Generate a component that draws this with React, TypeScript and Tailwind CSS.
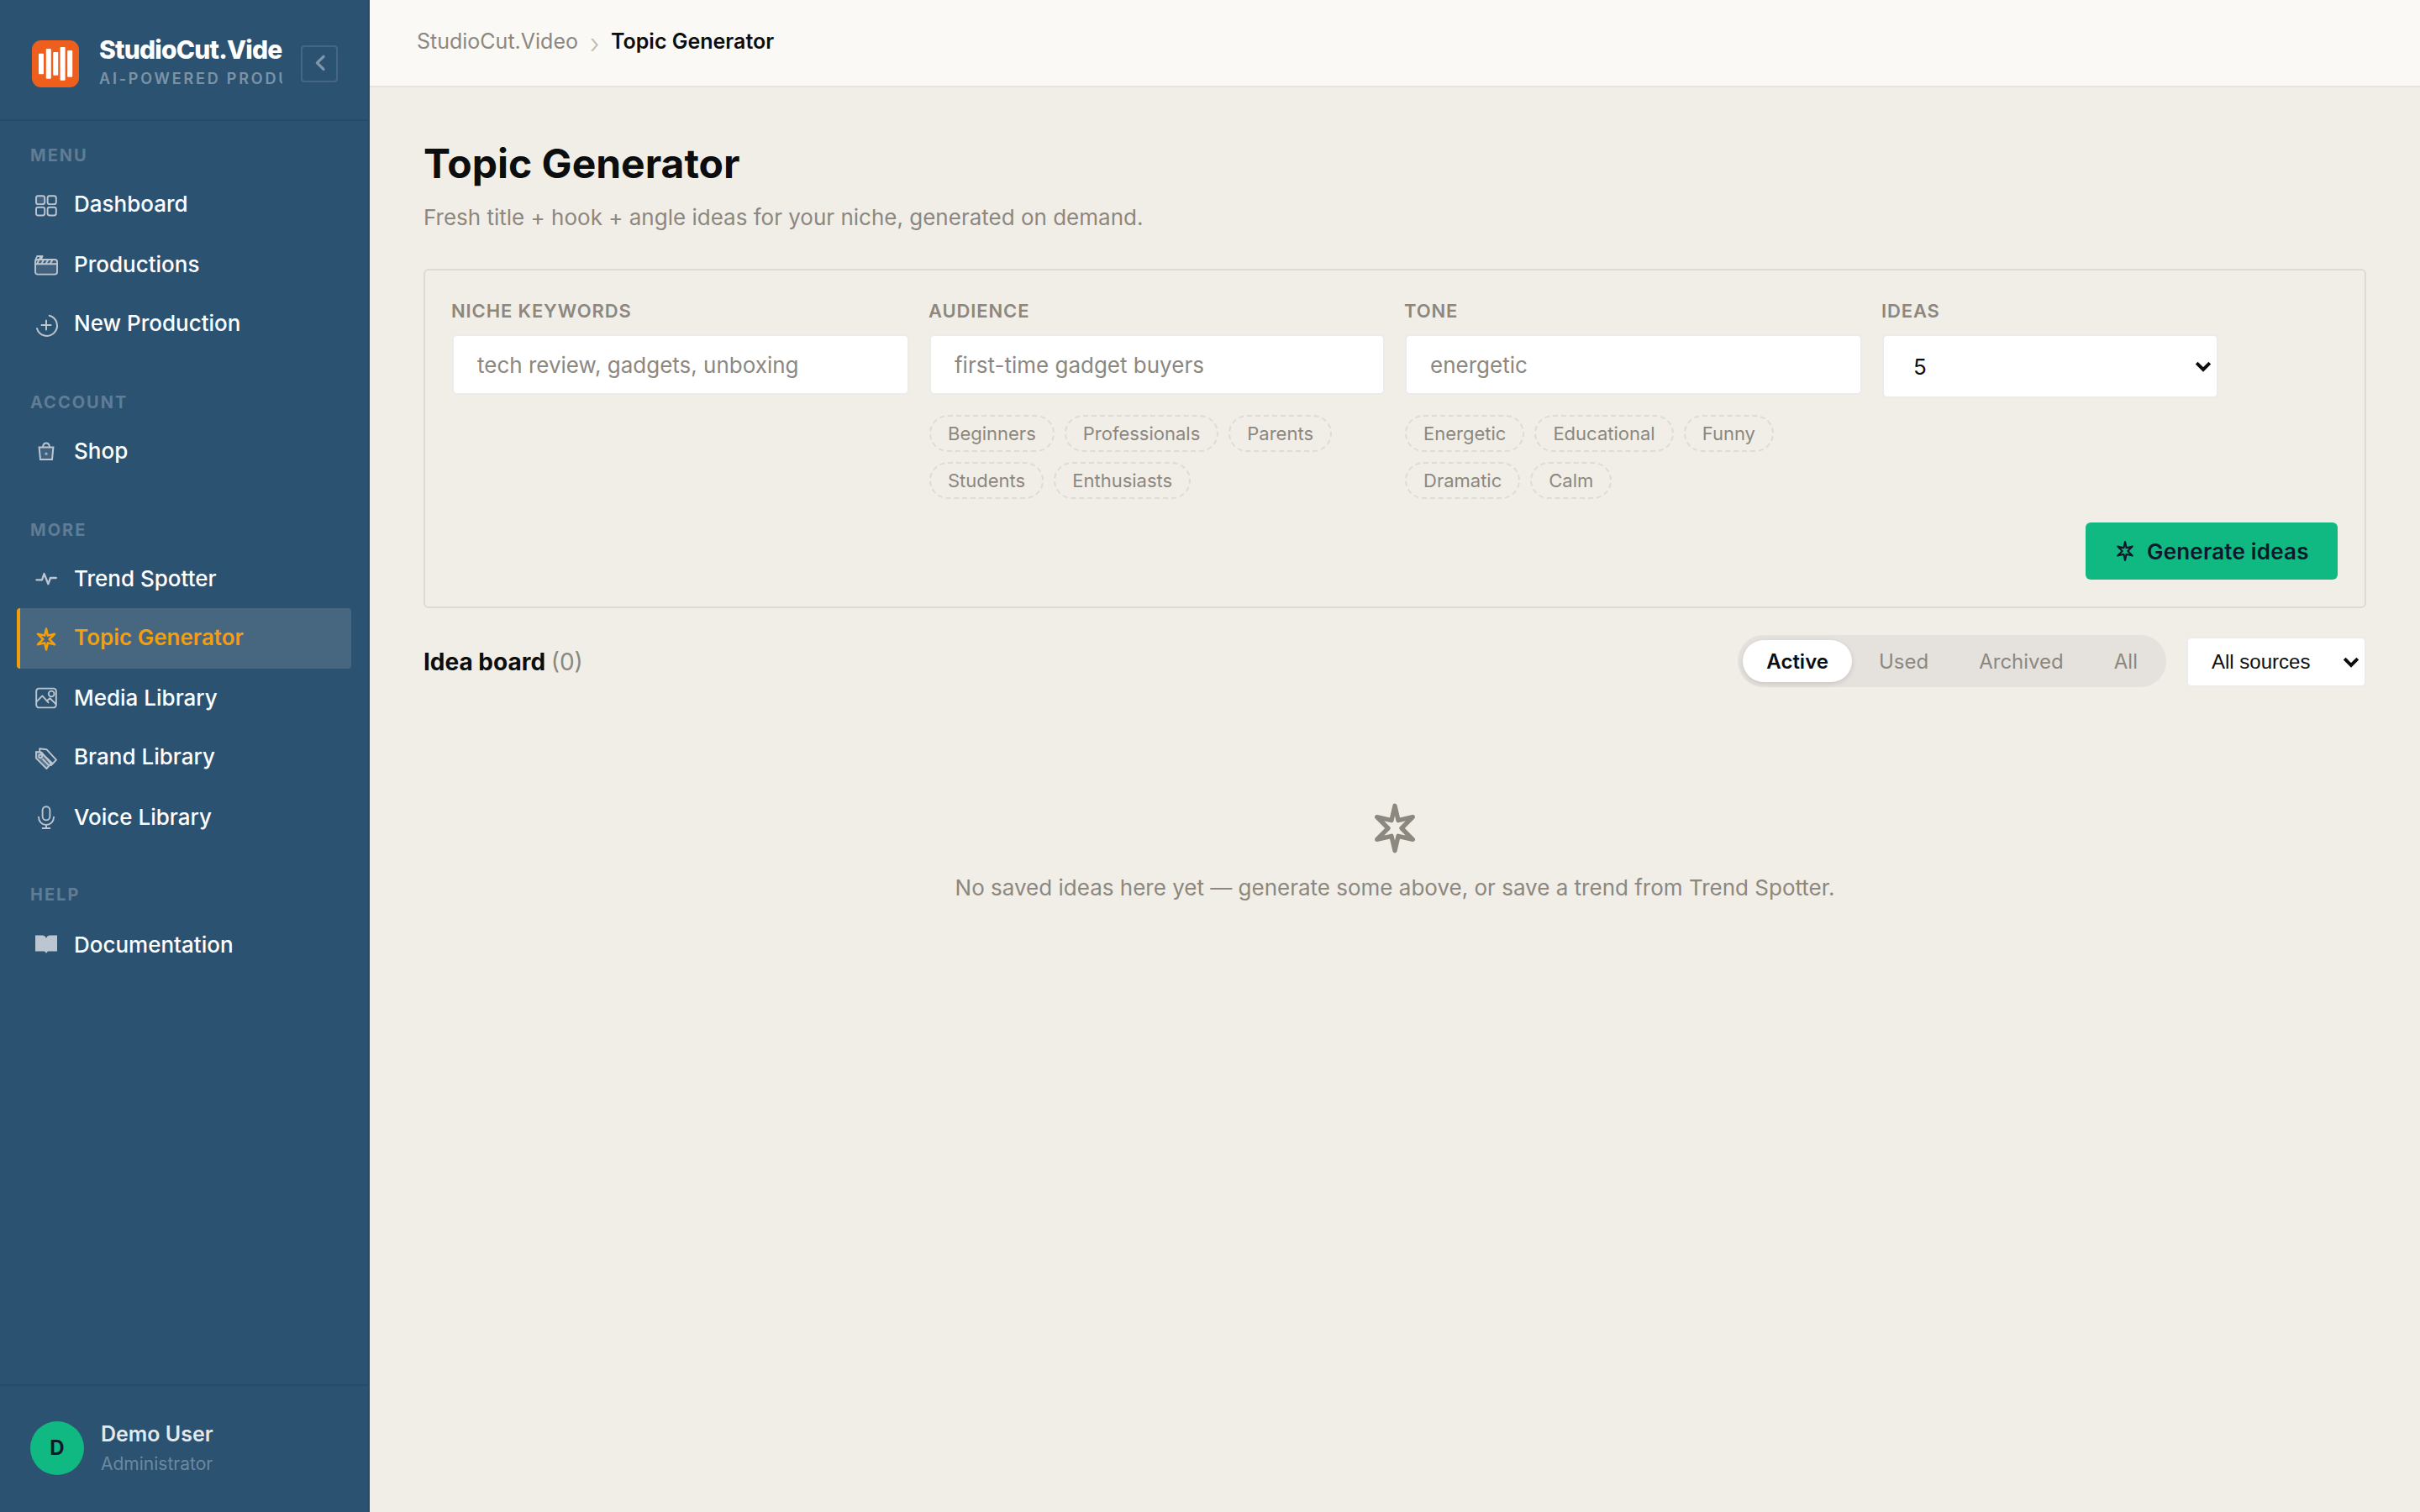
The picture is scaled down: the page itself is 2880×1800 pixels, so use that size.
import type { ReactNode } from "react";

const STAR = "M12 2L13.5 8.5L20 7L15 12L20 17L13.5 15.5L12 22L10.5 15.5L4 17L9 12L4 7L10.5 8.5Z";

function Star({ className }: { className: string }) {
  return (
    <svg viewBox="0 0 24 24" fill="none" stroke="currentColor" strokeWidth="2" strokeLinecap="round" strokeLinejoin="round" className={className}>
      <path d={STAR} />
    </svg>
  );
}

function NavIcon({ children, width = 2 }: { children: ReactNode; width?: number }) {
  return (
    <svg viewBox="0 0 30 30" fill="none" stroke="currentColor" strokeWidth={width} strokeLinecap="round" strokeLinejoin="round" className="size-[30px] shrink-0 overflow-visible">
      {children}
    </svg>
  );
}

const icons: Record<string, ReactNode> = {
  dashboard: (
    <NavIcon width={1.9}>
      <rect x="3" y="5.3" width="10.2" height="9.8" rx="2.4" fill="currentColor" fillOpacity="0.14" />
      <rect x="16.6" y="5.3" width="10.2" height="9.8" rx="2.4" />
      <rect x="3" y="18.7" width="10.2" height="9.8" rx="2.4" />
      <rect x="16.6" y="18.7" width="10.2" height="9.8" rx="2.4" />
    </NavIcon>
  ),
  productions: (
    <NavIcon width={1.9}>
      <rect x="2" y="10" width="26" height="17.6" rx="2.8" fill="currentColor" fillOpacity="0.14" />
      <path d="M2 15.2H28M2.3 10.5L4.2 6H10.6L8.6 10M4.2 15L8.4 6.4M9.4 15L12 10.2M14.6 15L17.2 10.2M19.8 15L22.4 10.2" />
    </NavIcon>
  ),
  create: (
    <NavIcon>
      <path d="M18.7 5.8A12.2 12.2 0 1 1 4 21M15 11.6V22.6M9.5 17.1H20.5" />
    </NavIcon>
  ),
  shop: (
    <NavIcon>
      <path d="M6.6 10.6H23.4L22 25H8Z" fill="currentColor" fillOpacity="0.14" strokeLinejoin="miter" />
      <path d="M11 10.2C11.4 7.2 13 5.6 15 5.6S18.6 7.2 19 10.2" />
      <circle cx="15" cy="18.2" r="1.6" fill="currentColor" stroke="none" opacity="0.8" />
    </NavIcon>
  ),
  trend: (
    <NavIcon width={2.3}>
      <path d="M3.4 16.3H10L12.5 9L17.4 21.2L20 14H26.8" />
    </NavIcon>
  ),
  topic: (
    <NavIcon>
      <path d={STAR} transform="translate(0 1) scale(1.25)" />
    </NavIcon>
  ),
  media: (
    <NavIcon width={1.9}>
      <rect x="3.2" y="3.6" width="23.6" height="22.8" rx="3.2" />
      <circle cx="21.2" cy="10" r="3.4" />
      <path d="M3.4 19.4L10.4 12.4L17.6 20.4M15.6 18.4L19.4 15.2L26.6 22.2" />
    </NavIcon>
  ),
  brand: (
    <NavIcon width={1.9}>
      <path d="M7.2 8V4.2L15.4 5.2L27 17.6L20.8 24" />
      <path d="M3 8L9.4 8.6L20.8 22.2L15.4 28L3 15.6Z" fill="currentColor" fillOpacity="0.3" />
      <path d="M8 8.2L22.6 22M11 17L18 24.2" />
      <circle cx="8.2" cy="13.2" r="2" />
    </NavIcon>
  ),
  voice: (
    <NavIcon width={1.9}>
      <rect x="10.6" y="2.2" width="8.8" height="16.2" rx="4.4" />
      <path d="M6 14.8A9 9.2 0 0 0 24 14.8M15 24V28M10.6 28H19.4" />
    </NavIcon>
  ),
  docs: (
    <NavIcon>
      <path d="M2 4.4H11Q14 4.8 15 7.8Q16 4.8 19 4.4H28V23.6H17L15 25.8L13 23.6H2Z" fill="currentColor" stroke="none" />
    </NavIcon>
  ),
};

type Item = { label: string; icon: string; row?: string; text?: string; active?: boolean };

const sections: { title: string; space: string; items: Item[] }[] = [
  {
    title: "MENU",
    space: "mt-[29px]",
    items: [
      { label: "Dashboard", icon: "dashboard" },
      { label: "Productions", icon: "productions", row: "h-[72px]", text: "pt-[2px]" },
      { label: "New Production", icon: "create" },
    ],
  },
  { title: "ACCOUNT", space: "mt-[47px]", items: [{ label: "Shop", icon: "shop" }] },
  {
    title: "MORE",
    space: "mt-[47px]",
    items: [
      { label: "Trend Spotter", icon: "trend" },
      { label: "Topic Generator", icon: "topic", row: "h-[72px]", text: "pb-[2px]", active: true },
      { label: "Media Library", icon: "media" },
      { label: "Brand Library", icon: "brand", row: "h-[72px]", text: "pb-[2px]" },
      { label: "Voice Library", icon: "voice" },
    ],
  },
  { title: "HELP", space: "mt-[45px]", items: [{ label: "Documentation", icon: "docs", row: "h-[72px]", text: "pt-[2px]" }] },
];

function NavRow({ item }: { item: Item }) {
  return (
    <a
      className={[
        "mx-5 flex items-center gap-[18px] rounded-[4px] border-l-4 pl-4 text-[26px] leading-8",
        item.row ?? "h-[70px]",
        item.active ? "border-[#f59e0b] bg-[#476781] font-semibold text-[#f59e0b]" : "border-transparent font-medium text-white",
      ].join(" ")}
    >
      <span className={item.active ? "shrink-0" : "shrink-0 text-[#bcc6d0]"}>{icons[item.icon]}</span>
      <span className={item.text ?? ""}>{item.label}</span>
    </a>
  );
}

function Logo() {
  return (
    <svg viewBox="0 0 60 60" className="size-[60px] shrink-0">
      <rect x="2" y="2" width="56" height="56" rx="11" fill="#ee5f1e" />
      <g fill="#fff">
        <rect x="10" y="17.7" width="6" height="24.6" rx="1" />
        <rect x="18.8" y="12" width="6" height="35.7" rx="1" />
        <rect x="27.2" y="16" width="6" height="27.8" rx="1" />
        <rect x="35.6" y="10" width="6" height="39.8" rx="1" />
        <rect x="44.2" y="14" width="6" height="31.8" rx="1" />
      </g>
    </svg>
  );
}

function Sidebar() {
  return (
    <aside className="flex h-full w-[440px] shrink-0 flex-col border-r-2 border-[#264a67] bg-[#2c5272]">
      <div className="flex h-[144px] shrink-0 items-center gap-[22px] border-b-2 border-[#264a67] px-9 pt-[10px]">
        <Logo />
        <div className="min-w-0 flex-1 overflow-hidden whitespace-nowrap">
          <div className="pt-px text-[30px] font-extrabold leading-[36px] tracking-[-0.8px] text-white">StudioCut.Video</div>
          <div className="pt-[3px] pb-[5px] text-[18px] font-semibold leading-[28px] tracking-[2.8px] text-white/40">AI-POWERED PRODUCTION</div>
        </div>
        <button className="flex size-11 shrink-0 items-center justify-center rounded-[4px] border-2 border-white/12 text-white/40">
          <svg viewBox="0 0 40 40" fill="none" stroke="currentColor" strokeWidth="3.4" strokeLinecap="round" strokeLinejoin="round" className="size-10">
            <path d="M25 11.4L17.4 18.9L25 26.4" />
          </svg>
        </button>
      </div>
      <nav className="flex-1">
        {sections.map((s) => (
          <div key={s.title} className={s.space}>
            <div className="mb-[11px] pl-9 text-[20px] font-bold leading-6 tracking-[0.1em] text-white/25">{s.title}</div>
            {s.items.map((i) => (
              <NavRow key={i.label} item={i} />
            ))}
          </div>
        ))}
      </nav>
      <div className="flex h-[152px] shrink-0 items-center gap-5 border-t-2 border-[#264a67] px-9 pb-[2px]">
        <div className="flex size-16 items-center justify-center rounded-full bg-[#10b981] text-[24px] font-bold text-[#0f172a]">D</div>
        <div className="pt-[2px]">
          <div className="text-[25px] font-semibold leading-[35px] text-white/88">Demo User</div>
          <div className="text-[21px] leading-[35px] text-white/32">Administrator</div>
        </div>
      </div>
    </aside>
  );
}

function Field({ label, placeholder, chips }: { label: string; placeholder: string; chips?: string[] }) {
  return (
    <div>
      <FieldLabel>{label}</FieldLabel>
      <input
        placeholder={placeholder}
        className="block h-[72px] w-full rounded-[6px] border-2 border-[#ebebeb] bg-white px-7 text-[26px] placeholder:text-[#8c877f]"
      />
      {chips && (
        <div className="mt-6 flex flex-wrap gap-3">
          {chips.map((c) => (
            <span key={c} className="h-11 rounded-full border-2 border-dashed border-[#dedbd5] px-5 text-[22px] leading-10 text-[#8c877f]">
              {c}
            </span>
          ))}
        </div>
      )}
    </div>
  );
}

function FieldLabel({ children }: { children: ReactNode }) {
  return <div className="-ml-px mb-[11px] text-[22px] font-semibold leading-[33px] tracking-[0.04em] text-[#8c877f]">{children}</div>;
}

function Caret() {
  return (
    <svg viewBox="0 0 20 13" fill="none" stroke="#0b0d0e" strokeWidth="4" className="h-[13px] w-5 shrink-0">
      <path d="M2.2 2.2L10 9.9L17.8 2.2" />
    </svg>
  );
}

const tabs = ["Active", "Used", "Archived", "All"];

export default function App() {
  return (
    <div className="flex h-[1800px] w-[2880px] overflow-hidden bg-[#f1eee7] font-['Inter',sans-serif] text-[#0b0d0e]">
      <Sidebar />
      <div className="flex min-w-0 flex-1 flex-col">
        <header className="flex h-[104px] items-center border-b-2 border-[#e4e3df] bg-[#faf9f5] px-14 pb-[4px] text-[25px] leading-8">
          <span className="text-[#8c877f]">StudioCut.Video</span>
          <span className="w-[39px] pt-[6px] text-center text-[32px] font-light text-[#bdbbb6]">›</span>
          <span className="font-semibold">Topic Generator</span>
        </header>
        <main className="px-16 pt-[60px]">
          <h1 className="text-[48px] font-bold leading-[62px]">Topic Generator</h1>
          <p className="mt-[14px] text-[26px] leading-[38px] text-[#8c877f]">Fresh title + hook + angle ideas for your niche, generated on demand.</p>

          <section className="mt-[42px] h-[404px] rounded-[6px] border-2 border-[#dedbd4] p-8">
            <div className="grid grid-cols-[544px_542px_544px_542px] gap-6">
              <Field label="NICHE KEYWORDS" placeholder="tech review, gadgets, unboxing" />
              <Field label="AUDIENCE" placeholder="first-time gadget buyers" chips={["Beginners", "Professionals", "Parents", "Students", "Enthusiasts"]} />
              <Field label="TONE" placeholder="energetic" chips={["Energetic", "Educational", "Funny", "Dramatic", "Calm"]} />
              <div>
                <FieldLabel>IDEAS</FieldLabel>
                <div className="flex h-[76px] w-[400px] items-center justify-between rounded-[6px] border-2 border-[#ebebeb] bg-white pl-[35px] pr-[6px] text-[26px]">
                  <span>5</span>
                  <Caret />
                </div>
              </div>
            </div>
            <div className="mt-7 flex justify-end">
              <button className="flex h-[68px] w-[300px] items-center gap-[13px] rounded-[6px] bg-[#10b981] pl-[34px] text-[26px] font-semibold tracking-[0.2px] whitespace-nowrap text-[#0f172a]">
                <Star className="size-[26px] shrink-0" />
                Generate ideas
              </button>
            </div>
          </section>

          <div className="mt-8 flex h-[62px] items-center justify-between">
            <h2 className="pt-[2px] text-[28px] font-bold">
              Idea board <span className="font-normal text-[#8c877f]">(0)</span>
            </h2>
            <div className="flex items-center gap-6">
              <div className="flex h-[62px] gap-1 rounded-full bg-[#e5e2dd] p-[6px] text-[24px] leading-[51px]">
                {tabs.map((t) => (
                  <span
                    key={t}
                    className={
                      t === "Active"
                        ? "h-[50px] rounded-full bg-white px-7 font-semibold shadow-[0_2px_6px_rgba(0,0,0,0.12)]"
                        : "h-[50px] rounded-full px-7 text-[#8c877f]"
                    }
                  >
                    {t}
                  </span>
                ))}
              </div>
              <div className="mt-[2px] flex h-[60px] w-[214px] items-center justify-between rounded-[6px] border-2 border-[#ebebeb] bg-white pl-[28px] pr-[6px] font-['Liberation_Sans',sans-serif] text-[24px]">
                <span>All sources</span>
                <Caret />
              </div>
            </div>
          </div>

          <div className="mt-[136px] flex flex-col items-center text-[#8c877f]">
            <Star className="size-16" />
            <p className="mt-5 text-[26px] leading-[38px]">No saved ideas here yet — generate some above, or save a trend from Trend Spotter.</p>
          </div>
        </main>
      </div>
    </div>
  );
}
